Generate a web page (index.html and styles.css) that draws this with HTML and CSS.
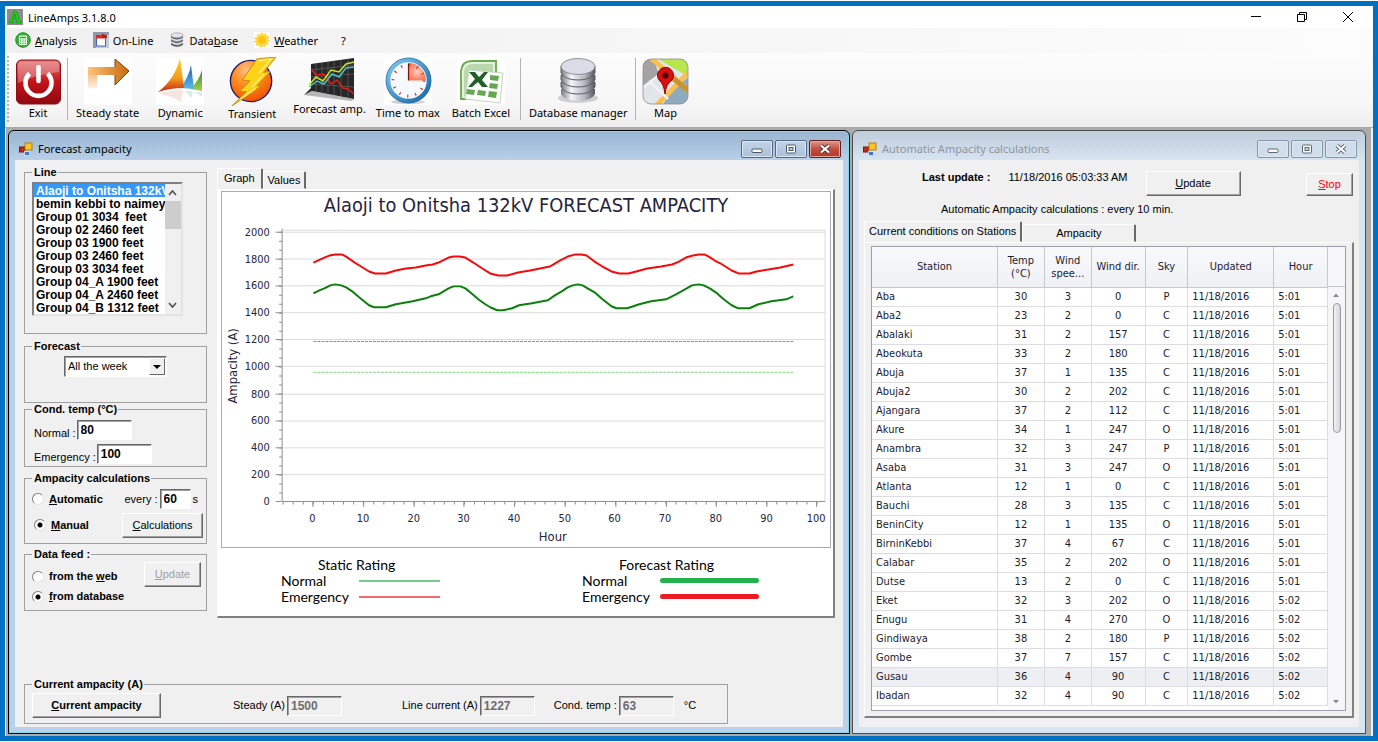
FILE: index.html
```html
<!DOCTYPE html>
<html lang="en">
<head>
    <meta charset="utf-8">
    <title>LineAmps 3.1.8.0</title>
    <meta name="viewport" content="width=device-width, initial-scale=1.0">
    <link rel="stylesheet" href="styles.css">
</head>
<body>
<div class="app">
    <header class="titlebar">
        <svg class="logo" viewBox="0 0 16 16"><rect width="16" height="16" fill="#8c8c8c"/><path d="M2 14V12.6L3 12.3 7 2H9.2L13 12.3 14.2 12.6V14H9V12.7L10.2 12.3 9.6 10.3H6L5.3 12.3 6.5 12.7V14ZM6.5 8.8H9.2L7.8 4.8Z" fill="#0be00b" stroke="#086b08" stroke-width=".4"/></svg>
        <span class="apptitle">LineAmps 3.1.8.0</span>
        <button class="sysbtn" aria-label="Minimize"><svg viewBox="0 0 12 12"><path d="M1 5.5H11" stroke="#000"/></svg></button>
        <button class="sysbtn" aria-label="Restore"><svg viewBox="0 0 12 12"><path d="M1.5 3.5H8.5V10.5H1.5ZM3.5 3.5V1.5H10.5V8.5H8.5" fill="none" stroke="#000"/></svg></button>
        <button class="sysbtn" aria-label="Close"><svg viewBox="0 0 12 12"><path d="M1 1L11 11M11 1L1 11" stroke="#000"/></svg></button>
    </header>

    <nav class="menu">
        <button class="menuitem">
            <svg viewBox="0 0 16 16"><circle cx="8" cy="8" r="7.3" fill="#35b535" stroke="#238a23"/><rect x="4" y="3.5" width="8" height="9.5" rx="1" fill="#e9fbe6"/><path d="M5 5.5H11" stroke="#3aa13a" stroke-width="1.5"/><path d="M5 8H11M5 9.8H11M5 11.6H11" stroke="#3aa13a" stroke-dasharray="1.2 1.2"/></svg>
            <span><u>A</u>nalysis</span>
        </button>
        <button class="menuitem">
            <svg viewBox="0 0 16 16"><rect width="16" height="16" fill="#c3cad6"/><path d="M0 0H16V3H3V16H0Z" fill="#8f99ab"/><rect x="3.5" y="4" width="9" height="10" fill="#fff" stroke="#3e68bd"/><rect x="3" y="3" width="10" height="3.5" fill="#e02b20"/><path d="M9 1.5L14 3.5V6H9Z" fill="#b81f1f"/></svg>
            <span>On-Line</span>
        </button>
        <button class="menuitem">
            <svg viewBox="0 0 16 16"><path d="M2 3V13Q8 17.5 14 13V3Z" fill="#a5a7ad"/><path d="M2 5Q8 9 14 5M2 8.6Q8 12.6 14 8.6M2 12Q8 16 14 12" fill="none" stroke="#54565e" stroke-width="1.2"/><path d="M2 6.3Q8 10.3 14 6.3M2 9.8Q8 13.8 14 9.8" fill="none" stroke="#f1f1f5"/><ellipse cx="8" cy="3.2" rx="6" ry="2.4" fill="#e4e5ec" stroke="#8e9098" stroke-width=".6"/></svg>
            <span>Data<u>b</u>ase</span>
        </button>
        <button class="menuitem">
            <svg viewBox="0 0 16 16"><rect width="16" height="16" fill="#fff"/><path d="M8 0L9.5 2.6 12 1.2 12.6 4 15.4 4.6 14 7 16 8.6 13.6 10 14.6 12.6 11.8 12.8 11 15.4 8.6 14 6.4 16 5 13.4 2.2 14 2.4 11.2 0 10 1.8 8 .4 5.4 3.2 4.8 3.6 1.8 6.2 2.8Z" fill="#ffd52e"/><circle cx="8" cy="8" r="4.8" fill="#ffc414" stroke="#ffe98a" stroke-width=".8"/></svg>
            <span><u>W</u>eather</span>
        </button>
        <button class="menuitem help">?</button>
    </nav>

    <div class="toolbar">
        <div class="grip"></div>
        <button class="tool narrow">
            <svg width="48" height="48" viewBox="0 0 48 48">
                <defs><linearGradient id="gExit" x1="0" y1="0" x2="0" y2="1"><stop offset="0" stop-color="#e06a6a"/><stop offset=".5" stop-color="#c5121a"/><stop offset="1" stop-color="#8e0a10"/></linearGradient></defs>
                <rect x="2.5" y="3" width="44" height="44" rx="5" fill="url(#gExit)" stroke="#8a1015"/>
                <path d="M4 26V8Q4 4.500 8 4.500H41Q45 4.500 45 8V15Q25 17 4 26Z" fill="#fff" opacity=".28"/>
                <path d="M15.500 16.500A13 13 0 1 0 33.500 16.500" fill="none" stroke="#fff" stroke-width="4.600"/>
                <path d="M24.500 10V24" stroke="#fff" stroke-width="4.600" stroke-linecap="round"/>
            </svg>
            <span>Exit</span>
        </button>
        <div class="sep"></div>
        <button class="tool">
            <svg width="48" height="48" viewBox="0 0 48 48">
                <defs><linearGradient id="gArr" x1="0" y1="0" x2="1" y2="0"><stop offset="0" stop-color="#ffc27a"/><stop offset="1" stop-color="#c96a08"/></linearGradient><linearGradient id="gLeg" x1="0" y1="0" x2="0" y2="1"><stop offset="0" stop-color="#e98b2d"/><stop offset="1" stop-color="#fff0dd"/></linearGradient></defs>
                <rect width="48" height="48" fill="#fff"/>
                <path d="M4 10H31V2L45 14 31 28V18H13V31H4Z" fill="url(#gLeg)"/>
                <path d="M4 10H31V2L45 14 31 28V18H4Z" fill="url(#gArr)"/>
                <path d="M31 10V2L45 14 31 28V18" fill="none" stroke="#5d3a12" stroke-width=".9"/>
            </svg>
            <span>Steady state</span>
        </button>
        <button class="tool">
            <svg width="48" height="48" viewBox="0 0 48 48">
                <defs><linearGradient id="gD1" x1="0" y1="0" x2="0" y2="1"><stop offset="0" stop-color="#ffd21f"/><stop offset=".6" stop-color="#f59a1b"/><stop offset="1" stop-color="#c6251b"/></linearGradient><linearGradient id="gD2" x1="0" y1="0" x2="0" y2="1"><stop offset="0" stop-color="#1b63ad"/><stop offset="1" stop-color="#5cb7ea"/></linearGradient><linearGradient id="gD3" x1="0" y1="0" x2="0" y2="1"><stop offset="0" stop-color="#2f8b3b"/><stop offset="1" stop-color="#a6d24a"/></linearGradient></defs>
                <rect width="48" height="48" fill="#fff"/>
                <path d="M34 32Q43 24 46 13V34Z" fill="url(#gD3)"/>
                <path d="M24 31Q33 20 35 8L38 32Z" fill="url(#gD2)"/>
                <path d="M2 35Q19 22 24 1L28 31Q14 31 2 35Z" fill="url(#gD1)"/>
                <path d="M2 37Q14 33 27 33L25 45Q14 38 2 37Z" fill="#f3d8d2" opacity=".7"/>
                <path d="M28 34L37 34 36 41ZM38 35H46V40Z" fill="#cfe3ea" opacity=".7"/>
            </svg>
            <span>Dynamic</span>
        </button>
        <button class="tool">
            <svg width="49" height="51" viewBox="0 0 49 51">
                <defs><radialGradient id="gTr" cx=".4" cy=".25" r=".8"><stop offset="0" stop-color="#ffc08a"/><stop offset=".45" stop-color="#ff8a1c"/><stop offset="1" stop-color="#f04d00"/></radialGradient></defs>
                <circle cx="23" cy="25" r="21.500" fill="url(#gTr)" stroke="#181870" stroke-width="1.400"/>
                <path d="M29 2L49 0 36 16 43 15 29 30 35 29 3 51 18 36 11 36 22 25 14 24Z" fill="#ffd21a" stroke="#c58a00"/>
                <path d="M31 4L44 2 31 17M36 18L24 31M28 33L12 44" fill="none" stroke="#fff09a" stroke-width="1.200"/>
            </svg>
            <span>Transient</span>
        </button>
        <button class="tool">
            <svg width="52" height="44" viewBox="0 0 52 44">
                <path d="M7 7L50 1V42L8 34 0 38 7 31Z" fill="#282728"/>
                <path d="M12 6V34M18 6V35M24 5V36M30 4V38M37 3V39M44 2V40M7 13L50 8M7 20L50 17M7 27L50 30" stroke="#656060" stroke-width=".7"/>
                <path d="M7 12L12 18 20 17 27 27 33 23 39 31 44 32 50 37" fill="none" stroke="#e02018" stroke-width="1.500"/>
                <path d="M5 30L13 24 20 27 28 17 35 20 42 11 50 10" fill="none" stroke="#45c5cf" stroke-width="1.500"/>
                <path d="M5 28L12 20 19 24 27 13 35 15 42 7 50 5" fill="none" stroke="#c8e820" stroke-width="1.500"/>
                <path d="M0 38L8 34 50 42 48 44Z" fill="#8b8b8b" opacity=".6"/>
            </svg>
            <span>Forecast amp.</span>
        </button>
        <button class="tool">
            <svg width="48" height="48" viewBox="0 0 48 48">
                <defs><linearGradient id="gClk" x1="0" y1="0" x2="1" y2="1"><stop offset="0" stop-color="#83c9f0"/><stop offset="1" stop-color="#1467a8"/></linearGradient><radialGradient id="gPie"><stop offset="0" stop-color="#ffd0c0"/><stop offset="1" stop-color="#fb7c5e"/></radialGradient></defs>
                <rect width="48" height="48" fill="#fff"/>
                <ellipse cx="24" cy="45" rx="17" ry="2" fill="#cfcfcf"/>
                <circle cx="24.500" cy="23.500" r="20.500" fill="#f7fafc" stroke="url(#gClk)" stroke-width="4.500"/>
                <circle cx="24.500" cy="23.500" r="22.500" fill="none" stroke="#1e679c" stroke-width=".7"/>
                <path d="M24.500 23.500V6A17.500 17.500 0 0 1 42 23.500Z" fill="url(#gPie)"/>
                <path d="M24.500 6.500V23.500" stroke="#7e1212" stroke-width="1.200"/>
                <circle cx="24.500" cy="23.500" r="15.500" fill="none" stroke="#c43b3b" stroke-width="3" stroke-dasharray="1.200 6.920"/>
            </svg>
            <span>Time to max</span>
        </button>
        <button class="tool">
            <svg width="48" height="48" viewBox="0 0 48 48">
                <rect width="48" height="48" fill="#fff"/>
                <path d="M4 42V14Q5 4 15 4H39V36Q39 42 33 42Z" fill="#e4f0dc" stroke="#6aa84f" stroke-width="1.800"/>
                <path d="M7 39V15Q8 7 16 7H36V20Z" fill="#b9d8ab"/>
                <path d="M12 13L46 16 43 46 8 42Z" fill="#fff" stroke="#c5d5bf"/>
                <path d="M33 18L42 19 41 24 33 23ZM33 26L41 27 40 32 32 31ZM32 34L40 35 39 41 31 40ZM21 33L29 34 28 39 20 38ZM10 32L18 33 17 38 9 37Z" fill="#68a751"/>
                <path d="M12 15H18L22 20 27 15H31L25 23 31 30H25L21 25 15 30H11L18 22Z" fill="#245f2a"/>
            </svg>
            <span>Batch Excel</span>
        </button>
        <div class="sep"></div>
        <button class="tool">
            <svg width="48" height="48" viewBox="0 0 48 48">
                <defs><linearGradient id="gDb" x1="0" y1="0" x2="1" y2="0"><stop offset="0" stop-color="#77777f"/><stop offset=".3" stop-color="#f4f4fa"/><stop offset=".7" stop-color="#b5b5be"/><stop offset="1" stop-color="#55555c"/></linearGradient></defs>
                <ellipse cx="24" cy="41" rx="20" ry="5" fill="#cfcfcf"/>
                <path d="M7 32V37Q11 44 24 44T41 37V32Z" fill="url(#gDb)"/>
                <path d="M7 25V30Q11 37 24 37T41 30V25Z" fill="url(#gDb)" stroke="#5e5e68"/>
                <path d="M7 18V23Q11 30 24 30T41 23V18Z" fill="url(#gDb)" stroke="#5e5e68"/>
                <path d="M7 9V16Q11 23 24 23T41 16V9Z" fill="url(#gDb)" stroke="#5e5e68"/>
                <ellipse cx="24" cy="9.500" rx="17" ry="8" fill="#dcdce8" stroke="#7b7b85" stroke-width=".8"/>
            </svg>
            <span>Database manager</span>
        </button>
        <div class="sep"></div>
        <button class="tool narrow">
            <svg width="48" height="48" viewBox="0 0 48 48">
                <defs><clipPath id="mapClip"><rect x="2" y="2" width="45" height="45" rx="8"/></clipPath></defs>
                <g clip-path="url(#mapClip)">
                    <rect width="48" height="48" fill="#e2e5ea"/>
                    <path d="M0 0H12L18 18 0 33Z" fill="#a3a3a3"/>
                    <path d="M14 0H48V20L34 12Z" fill="#b8e64f"/>
                    <path d="M30 32L48 20V48H22Z" fill="#8fa9bd"/>
                    <path d="M9 0L48 34M48 15L16 48" fill="none" stroke="#f9c04a" stroke-width="5"/>
                    <path d="M28 18L48 34" stroke="#c79432" stroke-width="5"/>
                    <path d="M0 32L18 18M8 24L27 42" fill="none" stroke="#f1f2f4" stroke-width="2.500"/>
                </g>
                <rect x="2" y="2" width="45" height="45" rx="8" fill="none" stroke="#8d8d8d" stroke-width=".8"/>
                <path d="M24 37Q23 27 18 23A8 8 0 1 1 31 23Q25 27 24 37Z" fill="#d80f0f" stroke="#900"/>
                <circle cx="24.500" cy="18.500" r="3" fill="#420808"/>
            </svg>
            <span>Map</span>
        </button>
    </div>

    <main class="desktop">
        <section class="window forecast">
            <div class="wtitle">
                <svg class="wicon" viewBox="0 0 14 14"><rect x=".5" y="5" width="5" height="5" fill="#c3281c" stroke="#7d160e"/><rect x="6" y="1" width="7" height="7" fill="#f9c52a" stroke="#b1800c"/><rect x="5.500" y="9.500" width="5" height="4" fill="#3f74d8" stroke="#fff" stroke-width=".6"/></svg>
                <h2>Forecast ampacity</h2>
                <button class="winbtn" aria-label="Minimize"><svg viewBox="0 0 12 12"><rect x="1" y="6" width="10" height="3.500" rx="1" fill="#fff" stroke="#4b5a6d"/></svg></button>
                <button class="winbtn" aria-label="Maximize"><svg viewBox="0 0 12 12"><rect x="1.500" y="2" width="9" height="8" rx="1" fill="#fff" stroke="#4b5a6d"/><rect x="4" y="4.500" width="4" height="3" fill="#b7c9dd" stroke="#4b5a6d"/></svg></button>
                <button class="winbtn close" aria-label="Close"><svg viewBox="0 0 12 12"><path d="M2 2.500L10 9.500M10 2.500L2 9.500" stroke="#553034" stroke-width="4"/><path d="M2 2.500L10 9.500M10 2.500L2 9.500" stroke="#fff" stroke-width="2.200"/></svg></button>
            </div>
            <div class="client">
                <div class="columns">
                    <div class="side">
                        <fieldset class="group line">
                            <legend>Line</legend>
                            <div class="listbox">
                                <select size="10" aria-label="Line">
                                    <option selected>Alaoji to Onitsha 132kV</option>
                                    <option>bemin kebbi to naimey</option>
                                    <option>Group 01 3034&nbsp; feet</option>
                                    <option>Group 02 2460 feet</option>
                                    <option>Group 03 1900 feet</option>
                                    <option>Group 03 2460 feet</option>
                                    <option>Group 03 3034 feet</option>
                                    <option>Group 04_A 1900 feet</option>
                                    <option>Group 04_A 2460 feet</option>
                                    <option>Group 04_B 1312 feet</option>
                                </select>
                                <div class="scroll">
                                    <svg viewBox="0 0 15 17"><path d="M4 11L7.500 7 11 11" fill="none" stroke="#505050" stroke-width="1.600"/></svg>
                                    <div class="thumb"></div>
                                    <svg viewBox="0 0 15 17"><path d="M4 6L7.500 10 11 6" fill="none" stroke="#505050" stroke-width="1.600"/></svg>
                                </div>
                            </div>
                        </fieldset>
                        <fieldset class="group period">
                            <legend>Forecast</legend>
                            <div class="combo">
                                <select aria-label="Forecast"><option>All the week</option></select>
                                <span class="drop"></span>
                            </div>
                        </fieldset>
                        <fieldset class="group cond">
                            <legend>Cond. temp (°C)</legend>
                            <div class="field"><label for="normal">Normal :</label><input id="normal" type="text" value="80"></div>
                            <div class="field"><label for="emergency">Emergency :</label><input id="emergency" type="text" value="100"></div>
                        </fieldset>
                        <fieldset class="group calc">
                            <legend>Ampacity calculations</legend>
                            <div class="choice">
                                <label><input type="radio" name="mode"><span><u>A</u>utomatic</span></label>
                                <div class="every"><label for="every">every :</label><input id="every" type="text" value="60"><span>s</span></div>
                            </div>
                            <div class="choice">
                                <label class="manual"><input type="radio" name="mode" checked><span><u>M</u>anual</span></label>
                                <button class="btn calcbtn"><u>C</u>alculations</button>
                            </div>
                        </fieldset>
                        <fieldset class="group feed">
                            <legend>Data feed :</legend>
                            <div class="choice">
                                <div class="radios">
                                    <label><input type="radio" name="feed"><span>from the <u>w</u>eb</span></label>
                                    <label><input type="radio" name="feed" checked><span><u>f</u>rom database</span></label>
                                </div>
                                <button class="btn feedbtn" disabled><u>U</u>pdate</button>
                            </div>
                        </fieldset>
                    </div>

                    <div class="tabs">
                        <div class="tablist">
                            <button class="tab active">Graph</button><button class="tab">Values</button>
                        </div>
                        <div class="panel">
                            <svg class="chart" viewBox="220 192 612 357">
                                <text class="ctitle" x="526" y="212" text-anchor="middle">Alaoji to Onitsha 132kV FORECAST AMPACITY</text>
                                <g class="gridlines">
                                    <path d="M280 230.500H827V503"/>
                                    <path d="M280 232.500H827M280 259.500H827M280 286.500H827M280 313.500H827M280 340.500H827M280 367.500H827M280 395.500H827M280 422.500H827M280 449.500H827M280 476.500H827"/>
                                </g>
                                <g class="axes">
                                    <path d="M280.500 229V503.500H827"/>
                                    <path d="M274 232.500H280M274 259.500H280M274 286.500H280M274 313.500H280M274 340.500H280M274 367.500H280M274 395.500H280M274 422.500H280M274 449.500H280M274 476.500H280M274 503.500H280"/>
                                    <path d="M311.500 504V509M362.500 504V509M413.500 504V509M463.500 504V509M514.500 504V509M565.500 504V509M616.500 504V509M667.500 504V509M717.500 504V509M768.500 504V509M818.500 504V509"/>
                                    <path d="M281 505H827" stroke-width="3" stroke-dasharray="1 9.140"/>
                                    <path d="M279 232V503" stroke-width="3" stroke-dasharray="1 8.050"/>
                                </g>
                                <g class="labels" text-anchor="end">
                                    <text x="268" y="236">2000</text><text x="268" y="263">1800</text><text x="268" y="290">1600</text>
                                    <text x="268" y="317">1400</text><text x="268" y="344">1200</text><text x="268" y="371">1000</text>
                                    <text x="268" y="399">800</text><text x="268" y="426">600</text><text x="268" y="453">400</text>
                                    <text x="268" y="480">200</text><text x="268" y="507">0</text>
                                </g>
                                <g class="labels" text-anchor="middle">
                                    <text x="311" y="524">0</text><text x="362" y="524">10</text><text x="413" y="524">20</text>
                                    <text x="463" y="524">30</text><text x="514" y="524">40</text><text x="565" y="524">50</text>
                                    <text x="615" y="524">60</text><text x="666" y="524">70</text><text x="717" y="524">80</text>
                                    <text x="768" y="524">90</text><text x="818" y="524">100</text>
                                </g>
                                <text class="axisname" x="553" y="543" text-anchor="middle">Hour</text>
                                <text class="axisname" transform="translate(235 367) rotate(-90)" text-anchor="middle">Ampacity (A)</text>
                                <path d="M312 342.500H795" stroke="#f0703c" stroke-dasharray="3 1"/>
                                <path d="M312 373.500H795" stroke="#7ddc7d" stroke-dasharray="3 1"/>
                                <polyline class="serie" stroke="#f80808" points="312,263 323,258 328,256 334,255 341,255 345,257 352,262 360,267 368,272 374,274 385,274 395,271 405,269 415,268 425,266 432,265 438,263 448,258 453,257 459,257 465,258 473,263 482,269 490,274 498,276 507,276 518,273 530,271 540,269 550,267 555,264 560,261 568,257 575,255 582,255 587,256 595,262 603,267 612,272 620,274 629,274 637,272 648,269 662,267 673,265 680,262 687,258 694,256 700,255 706,255 710,257 716,261 722,264 733,271 740,274 751,274 758,272 770,270 782,268 795,265"/>
                                <polyline class="serie" stroke="#0b7f0b" points="312,294 318,291 323,289 329,286 334,285 340,286 345,288 351,292 358,298 368,306 373,308 385,308 395,305 412,302 425,299 430,297 438,295 443,292 448,289 453,287 460,287 465,289 471,294 478,300 485,305 490,308 497,311 503,311 512,309 519,306 532,304 548,301 555,296 562,292 568,288 573,286 578,285 583,286 588,289 595,293 603,300 612,307 617,309 628,309 634,307 640,305 652,302 667,300 677,295 686,290 693,286 700,285 705,286 711,289 717,293 725,300 733,306 739,309 751,309 760,305 773,302 788,300 795,297"/>
                            </svg>
                            <div class="ratings">
                                <div class="rating">
                                    <h3>Static Rating</h3>
                                    <p><span>Normal</span><i class="thin green"></i></p>
                                    <p><span>Emergency</span><i class="thin red"></i></p>
                                </div>
                                <div class="rating">
                                    <h3>Forecast Rating</h3>
                                    <p><span>Normal</span><i class="thick green"></i></p>
                                    <p><span>Emergency</span><i class="thick red"></i></p>
                                </div>
                            </div>
                        </div>
                    </div>
                </div>

                <fieldset class="group current">
                    <legend>Current ampacity (A)</legend>
                    <div class="currentrow">
                        <button class="btn bold currentbtn"><u>C</u>urrent ampacity</button>
                        <div class="field"><label for="steady">Steady (A)</label><input id="steady" type="text" value="1500" disabled></div>
                        <div class="field"><label for="linecur">Line current (A)</label><input id="linecur" type="text" value="1227" disabled></div>
                        <div class="field last"><label for="ctemp">Cond. temp :</label><input id="ctemp" type="text" value="63" disabled><span class="unit">°C</span></div>
                    </div>
                </fieldset>
            </div>
        </section>

        <section class="window auto">
            <div class="wtitle">
                <svg class="wicon" viewBox="0 0 14 14"><rect x=".5" y="5" width="5" height="5" fill="#c3281c" stroke="#7d160e"/><rect x="6" y="1" width="7" height="7" fill="#f9c52a" stroke="#b1800c"/><rect x="5.500" y="9.500" width="5" height="4" fill="#3f74d8" stroke="#fff" stroke-width=".6"/></svg>
                <h2>Automatic Ampacity calculations</h2>
                <button class="winbtn" aria-label="Minimize"><svg viewBox="0 0 12 12"><rect x="1" y="6" width="10" height="3.500" rx="1" fill="#fff" stroke="#5c6878"/></svg></button>
                <button class="winbtn" aria-label="Maximize"><svg viewBox="0 0 12 12"><rect x="1.500" y="2" width="9" height="8" rx="1" fill="#fff" stroke="#5c6878"/><rect x="4" y="4.500" width="4" height="3" fill="#c5d3e2" stroke="#5c6878"/></svg></button>
                <button class="winbtn" aria-label="Close"><svg viewBox="0 0 12 12"><path d="M2 2.500L10 9.500M10 2.500L2 9.500" stroke="#5c6878" stroke-width="4"/><path d="M2 2.500L10 9.500M10 2.500L2 9.500" stroke="#fff" stroke-width="2"/></svg></button>
            </div>
            <div class="client">
                <div class="status">
                    <b>Last update :</b>
                    <span>11/18/2016 05:03:33 AM</span>
                    <button class="btn updatebtn"><u>U</u>pdate</button>
                    <button class="btn stopbtn"><u>S</u>top</button>
                </div>
                <p class="note">Automatic Ampacity calculations : every 10 min.</p>
                <div class="tabs">
                    <div class="tablist">
                        <button class="tab active">Current conditions on Stations</button><button class="tab wide">Ampacity</button>
                    </div>
                    <div class="panel">
                        <div class="grid">
                            <table>
                                <thead>
                                    <tr><th class="cstation">Station</th><th class="ctemp">Temp<br>(°C)</th><th class="cspeed">Wind<br>spee...</th><th class="cdir">Wind dir.</th><th class="csky">Sky</th><th class="cdate">Updated</th><th class="chour">Hour</th></tr>
                                </thead>
                                <tbody>
                                    <tr><td>Aba</td><td>30</td><td>3</td><td>0</td><td>P</td><td>11/18/2016</td><td>5:01</td></tr>
                                    <tr><td>Aba2</td><td>23</td><td>2</td><td>0</td><td>C</td><td>11/18/2016</td><td>5:01</td></tr>
                                    <tr><td>Abalaki</td><td>31</td><td>2</td><td>157</td><td>C</td><td>11/18/2016</td><td>5:01</td></tr>
                                    <tr><td>Abeokuta</td><td>33</td><td>2</td><td>180</td><td>C</td><td>11/18/2016</td><td>5:01</td></tr>
                                    <tr><td>Abuja</td><td>37</td><td>1</td><td>135</td><td>C</td><td>11/18/2016</td><td>5:01</td></tr>
                                    <tr><td>Abuja2</td><td>30</td><td>2</td><td>202</td><td>C</td><td>11/18/2016</td><td>5:01</td></tr>
                                    <tr><td>Ajangara</td><td>37</td><td>2</td><td>112</td><td>C</td><td>11/18/2016</td><td>5:01</td></tr>
                                    <tr><td>Akure</td><td>34</td><td>1</td><td>247</td><td>O</td><td>11/18/2016</td><td>5:01</td></tr>
                                    <tr><td>Anambra</td><td>32</td><td>3</td><td>247</td><td>P</td><td>11/18/2016</td><td>5:01</td></tr>
                                    <tr><td>Asaba</td><td>31</td><td>3</td><td>247</td><td>O</td><td>11/18/2016</td><td>5:01</td></tr>
                                    <tr><td>Atlanta</td><td>12</td><td>1</td><td>0</td><td>C</td><td>11/18/2016</td><td>5:01</td></tr>
                                    <tr><td>Bauchi</td><td>28</td><td>3</td><td>135</td><td>C</td><td>11/18/2016</td><td>5:01</td></tr>
                                    <tr><td>BeninCity</td><td>12</td><td>1</td><td>135</td><td>O</td><td>11/18/2016</td><td>5:01</td></tr>
                                    <tr><td>BirninKebbi</td><td>37</td><td>4</td><td>67</td><td>C</td><td>11/18/2016</td><td>5:01</td></tr>
                                    <tr><td>Calabar</td><td>35</td><td>2</td><td>202</td><td>O</td><td>11/18/2016</td><td>5:01</td></tr>
                                    <tr><td>Dutse</td><td>13</td><td>2</td><td>0</td><td>C</td><td>11/18/2016</td><td>5:01</td></tr>
                                    <tr><td>Eket</td><td>32</td><td>3</td><td>202</td><td>O</td><td>11/18/2016</td><td>5:02</td></tr>
                                    <tr><td>Enugu</td><td>31</td><td>4</td><td>270</td><td>O</td><td>11/18/2016</td><td>5:02</td></tr>
                                    <tr><td>Gindiwaya</td><td>38</td><td>2</td><td>180</td><td>P</td><td>11/18/2016</td><td>5:02</td></tr>
                                    <tr><td>Gombe</td><td>37</td><td>7</td><td>157</td><td>C</td><td>11/18/2016</td><td>5:02</td></tr>
                                    <tr class="selected"><td>Gusau</td><td>36</td><td>4</td><td>90</td><td>C</td><td>11/18/2016</td><td>5:02</td></tr>
                                    <tr><td>Ibadan</td><td>32</td><td>4</td><td>90</td><td>C</td><td>11/18/2016</td><td>5:02</td></tr>
                                </tbody>
                            </table>
                            <div class="gridscroll">
                                <div class="corner"></div>
                                <svg viewBox="0 0 16 16"><path d="M5 10L8 6.500 11 10Z" fill="#8a8a90"/></svg>
                                <div class="track"><div class="thumb"></div></div>
                                <svg viewBox="0 0 16 16"><path d="M5 6L8 9.500 11 6Z" fill="#8a8a90"/></svg>
                            </div>
                        </div>
                    </div>
                </div>
            </div>
        </section>
    </main>
</div>
</body>
</html>
```

FILE: styles.css
```css
* {
    box-sizing: border-box;
}
body {
    margin: 0;
    padding: 1px 0;
    background-color: #fff;
    font-family: "Liberation Sans", Arial, sans-serif;
    font-size: 11px;
    line-height: 13px;
    color: #000;
}
button, input, select {
    font: inherit;
    color: inherit;
    margin: 0;
    border-radius: 0;
}
button {
    padding: 0;
    background: none;
    border: 0;
}
h2, h3, p {
    margin: 0;
    font-weight: normal;
}
.app {
    display: flex;
    flex-direction: column;
    min-height: calc(100vh - 2px);
    border: 5px solid #0070c0;
}

/* title bar and menu */
.titlebar {
    display: flex;
    align-items: center;
    height: 22px;
    padding: 0 2px;
    font-family: "Noto Sans", "Segoe UI", sans-serif;
}
.logo {
    width: 16px;
    height: 16px;
    margin-right: 5px;
}
.apptitle {
    flex: 1;
}
.sysbtn {
    width: 46px;
}
.sysbtn svg {
    display: block;
    width: 12px;
    height: 12px;
    margin: 0 auto;
}
.menu {
    display: flex;
    align-items: center;
    gap: 16px;
    height: 25px;
    padding: 0 10px 1px;
    background: linear-gradient(to right, #f0f0f0, #fcfcfc);
    font-family: "Noto Sans", "Segoe UI", sans-serif;
}
.menuitem {
    display: flex;
    align-items: center;
    gap: 4px;
}
.menuitem svg {
    width: 16px;
    height: 16px;
}
.help {
    padding-left: 7px;
}

/* toolbar */
.toolbar {
    display: flex;
    align-items: stretch;
    gap: 2px;
    height: 75px;
    padding: 3px 4px 5px 2px;
    background: linear-gradient(to bottom, #fcfcfc, #f6f6f6 70%, #eeeeee);
    border-bottom: 1px solid #a8a8a8;
    font-family: "Noto Sans", "Segoe UI", sans-serif;
}
.grip {
    width: 2px;
    margin-right: 2px;
    background: repeating-linear-gradient(to bottom, #b4b4b4 0, #b4b4b4 2px, transparent 2px, transparent 4px);
}
.tool {
    display: flex;
    flex-direction: column;
    align-items: center;
    min-width: 70px;
    padding: 1px 4px 0;
    white-space: nowrap;
}
.tool.narrow {
    min-width: 50px;
    padding: 1px 0 0;
}
.tool span {
    line-height: 16px;
}
.sep {
    width: 1px;
    margin: 2px;
    background-color: #b4b4b4;
}

/* mdi windows */
.desktop {
    flex: 1;
    display: flex;
    gap: 2px;
    padding: 2px 5px 2px 2px;
    background-color: #ababab;
    border: solid #f0f0f0;
    border-width: 0 2px 0 1px;
}
.window {
    display: flex;
    flex-direction: column;
    padding: 0 6px 6px;
    border: 1px solid #000;
    border-radius: 6px 6px 0 0;
    box-shadow: inset 0 0 0 1px #7fd8ee;
    background-color: #b9d1ea;
}
.forecast {
    flex: 828;
    background: #b9d1ea linear-gradient(to bottom, #99b4d1, #b9d1ea) top / 100% 30px no-repeat;
}
.auto {
    flex: 500;
    background: #d7e4f2 linear-gradient(to bottom, #bfcddb, #d7e4f2) top / 100% 30px no-repeat;
    border-color: #4c4c4c;
    box-shadow: none;
}
.wtitle {
    display: flex;
    align-items: center;
    gap: 2px;
    height: 29px;
    padding: 6px 2px 0 4px;
    font-family: "Noto Sans", "Segoe UI", sans-serif;
}
.auto .wtitle {
    color: #8f959c;
}
.wicon {
    width: 14px;
    height: 14px;
    margin-right: 3px;
}
.wtitle h2 {
    flex: 1;
    font-size: 11px;
}
.winbtn {
    width: 32px;
    height: 18px;
    background: linear-gradient(to bottom, #c3d4e7, #a9c1db);
    border: 1px solid #56687f;
    border-radius: 2px;
    box-shadow: inset 0 0 0 1px #dce7f2;
}
.auto .winbtn {
    background: #d0ddea;
    border-color: #8795a8;
}
.winbtn.close {
    background: linear-gradient(to bottom, #dc9a8e, #c25040 50%, #b0392a);
    border-color: #5c2320;
    box-shadow: inset 0 0 0 1px #e0a79c;
}
.winbtn svg {
    display: block;
    width: 12px;
    height: 12px;
    margin: 0 auto;
}
.client {
    flex: 1;
    display: flex;
    flex-direction: column;
    background-color: #f0f0f0;
}
.forecast .client {
    padding: 6px 8px 3px 9px;
}
.auto .client {
    padding: 11px 5px 9px;
}

/* shared controls */
.btn {
    height: 25px;
    background-color: #f0f0f0;
    border: 1px solid;
    border-color: #fff #696969 #696969 #fff;
    box-shadow: inset -1px -1px 0 #a0a0a0;
    text-align: center;
}
.btn:disabled {
    color: #a0a0a0;
}
.bold {
    font-weight: bold;
}
input[type=text] {
    width: 55px;
    height: 20px;
    padding: 0 0 0 3px;
    border: 1px solid;
    border-color: #696969 #fff #fff #696969;
    box-shadow: inset 1px 1px 0 #a0a0a0;
    background-color: #fff;
    font-size: 12px;
    font-weight: bold;
}
input[type=text]:disabled {
    background-color: #f0f0f0;
    color: #6d6d6d;
}
input[type=radio] {
    appearance: none;
    width: 12px;
    height: 12px;
    border: 1px solid;
    border-color: #808080 #e3e3e3 #e3e3e3 #808080;
    border-radius: 50%;
    background-color: #fff;
}
input[type=radio]:checked {
    background: radial-gradient(circle, #000 2px, #fff 3px);
}
.group {
    min-width: 0;
    margin: 0;
    padding: 0 3px 0 7px;
    border: 1px solid #a0a0a0;
}
.group legend {
    padding: 0 1px 0 2px;
    font-weight: bold;
}
.field {
    display: flex;
    align-items: flex-end;
    gap: 1px;
}

/* left column */
.columns {
    display: flex;
    align-items: flex-start;
    gap: 10px;
}
.side {
    flex: none;
    width: 183px;
}
.line {
    padding-bottom: 17px;
}
.listbox {
    display: flex;
    width: 151px;
    margin-top: 3px;
    border: 2px solid;
    border-color: #808080 #e3e3e3 #e3e3e3 #808080;
    background-color: #fff;
}
.listbox select {
    flex: 1;
    min-width: 0;
    height: 130px;
    padding: 0;
    border: 0;
    outline: 0;
    overflow: hidden;
    background-color: #fff;
    font-size: 12px;
}
.listbox option {
    height: 13px;
    min-height: 13px;
    padding: 0 2px;
    font-weight: bold;
    line-height: 13px;
}
.listbox option:checked {
    background: #3399ff linear-gradient(#3399ff, #3399ff);
    color: #fff !important;
}
.scroll {
    display: flex;
    flex-direction: column;
    width: 16px;
    background-color: #f0f0f0;
}
.scroll svg {
    width: 15px;
    height: 17px;
}
.scroll .thumb {
    height: 28px;
    margin-bottom: auto;
    background-color: #cdcdcd;
}
.period {
    margin-top: 6px;
    padding-bottom: 25px;
}
.combo {
    position: relative;
    width: 103px;
    margin: 3px 0 0 32px;
}
.combo select {
    display: block;
    appearance: none;
    width: 100%;
    height: 21px;
    padding: 0 20px 0 3px;
    border: 1px solid;
    border-color: #696969 #fff #fff #696969;
    box-shadow: inset 1px 1px 0 #a0a0a0;
    background-color: #fff;
}
.drop {
    position: absolute;
    top: 2px;
    right: 2px;
    width: 16px;
    height: 17px;
    border: 1px solid;
    border-color: #fff #696969 #696969 #fff;
    background-color: #f0f0f0;
    pointer-events: none;
}
.drop::after {
    content: "";
    position: absolute;
    left: 3px;
    top: 6px;
    border: 4px solid transparent;
    border-top-color: #000;
    border-bottom: 0;
}
.cond {
    padding: 4px 3px 2px 9px;
}
.cond legend {
    margin-left: -2px;
}
.cond .field + .field {
    margin-top: 4px;
}
.calc {
    margin-top: 5px;
    padding-top: 1px;
    padding-bottom: 5px;
}
.choice {
    display: flex;
    align-items: center;
    justify-content: space-between;
    min-height: 26px;
}
.choice label {
    display: flex;
    align-items: center;
    gap: 5px;
}
.choice label span {
    font-weight: bold;
}
.choice .manual {
    padding-left: 2px;
}
.every {
    display: flex;
    align-items: center;
    gap: 2px;
    margin-right: 5px;
}
.every input[type=text] {
    width: 31px;
}
.calcbtn {
    width: 81px;
}
.feed {
    margin-top: 4px;
    padding-bottom: 7px;
}
.feed .choice {
    align-items: flex-start;
}
.radios {
    display: flex;
    flex-direction: column;
    gap: 7px;
    padding-top: 9px;
}
.feedbtn {
    width: 57px;
    margin: 1px 2px 0 0;
}

/* tabs */
.tabs {
    flex: 1;
    min-width: 0;
    display: flex;
    flex-direction: column;
}
.forecast .tabs {
    padding-top: 2px;
}
.tablist {
    display: flex;
    align-items: flex-end;
    height: 21px;
}
.tab {
    height: 18px;
    padding: 0 4px;
    border: 1px solid;
    border-color: #fff #696969 transparent #fff;
    border-right-width: 2px;
    border-radius: 2px 2px 0 0;
}
.tab.active {
    height: 21px;
    padding: 0 6px;
}
.tab.wide {
    width: 114px;
}
.panel {
    flex: 1;
    padding: 1px 2px 2px 3px;
    border: 1px solid;
    border-color: #fff #808080 #808080 #fff;
    border-right-width: 2px;
    border-bottom-width: 2px;
}
.forecast .panel {
    background-color: #fff;
}

/* chart */
.chart {
    display: block;
    width: 100%;
    border: 1px solid #a9acb8;
    background-color: #fff;
    font-family: "DejaVu Sans Condensed", Tahoma, sans-serif;
    fill: none;
}
.chart text {
    fill: #24243c;
}
.ctitle {
    font-size: 20px;
}
.labels {
    font-size: 11px;
}
.axisname {
    font-size: 13px;
}
.gridlines {
    stroke: #dcdcdc;
}
.axes {
    stroke: #8c8c8c;
}
.serie {
    stroke-width: 2;
    stroke-linejoin: round;
}
.ratings {
    display: flex;
    justify-content: space-between;
    padding: 9px 67px 9px 60px;
    font-family: Lato, Calibri, sans-serif;
    font-size: 14px;
    line-height: 16px;
}
.rating {
    width: 182px;
}
.rating h3 {
    padding-left: 37px;
    font-size: 14px;
}
.rating p {
    display: flex;
    align-items: center;
}
.rating p span {
    width: 78px;
}
.thin {
    width: 81px;
    height: 2px;
    opacity: .65;
}
.thick {
    width: 99px;
    height: 5px;
    border-radius: 3px;
}
.green {
    background-color: #22b14c;
}
.red {
    background-color: #ed1c24;
}

/* current ampacity */
.current {
    width: 704px;
    max-width: 100%;
    margin-top: auto;
}
.currentrow {
    display: flex;
    align-items: center;
    padding: 2px 0 5px;
}
.currentbtn {
    width: 129px;
    margin-right: 72px;
}
.current .field {
    align-items: center;
    gap: 2px;
    margin-right: 60px;
}
.current .field.last {
    margin: 0 0 0 -41px;
}
.unit {
    padding-left: 8px;
}

/* automatic calculations */
.status {
    display: flex;
    align-items: flex-start;
    padding: 0 1px 0 58px;
}
.status b {
    margin-right: 18px;
}
.updatebtn {
    width: 95px;
    margin-left: 18px;
}
.stopbtn {
    width: 47px;
    height: 23px;
    margin: 2px 0 0 auto;
    color: #f00;
}
.note {
    padding: 7px 0 5px 77px;
}
.auto .tab.active {
    padding: 0 4px;
}
.auto .panel {
    padding: 3px 6px 5px;
}
.grid {
    display: flex;
    height: 100%;
    border: 1px solid #9da0aa;
    background-color: #fff;
    font-family: "DejaVu Sans Condensed", Tahoma, sans-serif;
    color: #1c1c30;
}
.grid table {
    flex: 1;
    align-self: flex-start;
    border-collapse: collapse;
    table-layout: fixed;
}
.grid th, .grid td {
    height: 19px;
    padding: 0 4px;
    border: solid #dcdce2;
    border-width: 0 1px 1px 0;
    text-align: center;
    font-weight: normal;
}
.grid th {
    height: 40px;
    padding: 0;
    background: linear-gradient(to bottom, #f8f9fb, #eff0f4);
    border-color: #c6c8d0;
}
.grid td:first-child, .grid td:nth-child(6), .grid td:nth-child(7) {
    text-align: left;
}
.selected {
    background-color: #eeeff2;
}
.cstation {
    width: 126px;
}
.ctemp, .cspeed {
    width: 47px;
}
.cdir {
    width: 54px;
}
.csky {
    width: 43px;
}
.cdate {
    width: 86px;
}
.chour {
    width: 54px;
}
.gridscroll {
    display: flex;
    flex-direction: column;
    width: 17px;
    background-color: #f6f6f8;
}
.corner {
    height: 40px;
    border-bottom: 1px solid #c6c8d0;
}
.gridscroll svg {
    width: 16px;
    height: 16px;
}
.track {
    flex: 1;
}
.track .thumb {
    width: 8px;
    height: 130px;
    margin: 0 auto;
    border: 1px solid #9a9aa2;
    border-radius: 4px;
    background: linear-gradient(to right, #f2f2f4, #d4d4da);
}
```
